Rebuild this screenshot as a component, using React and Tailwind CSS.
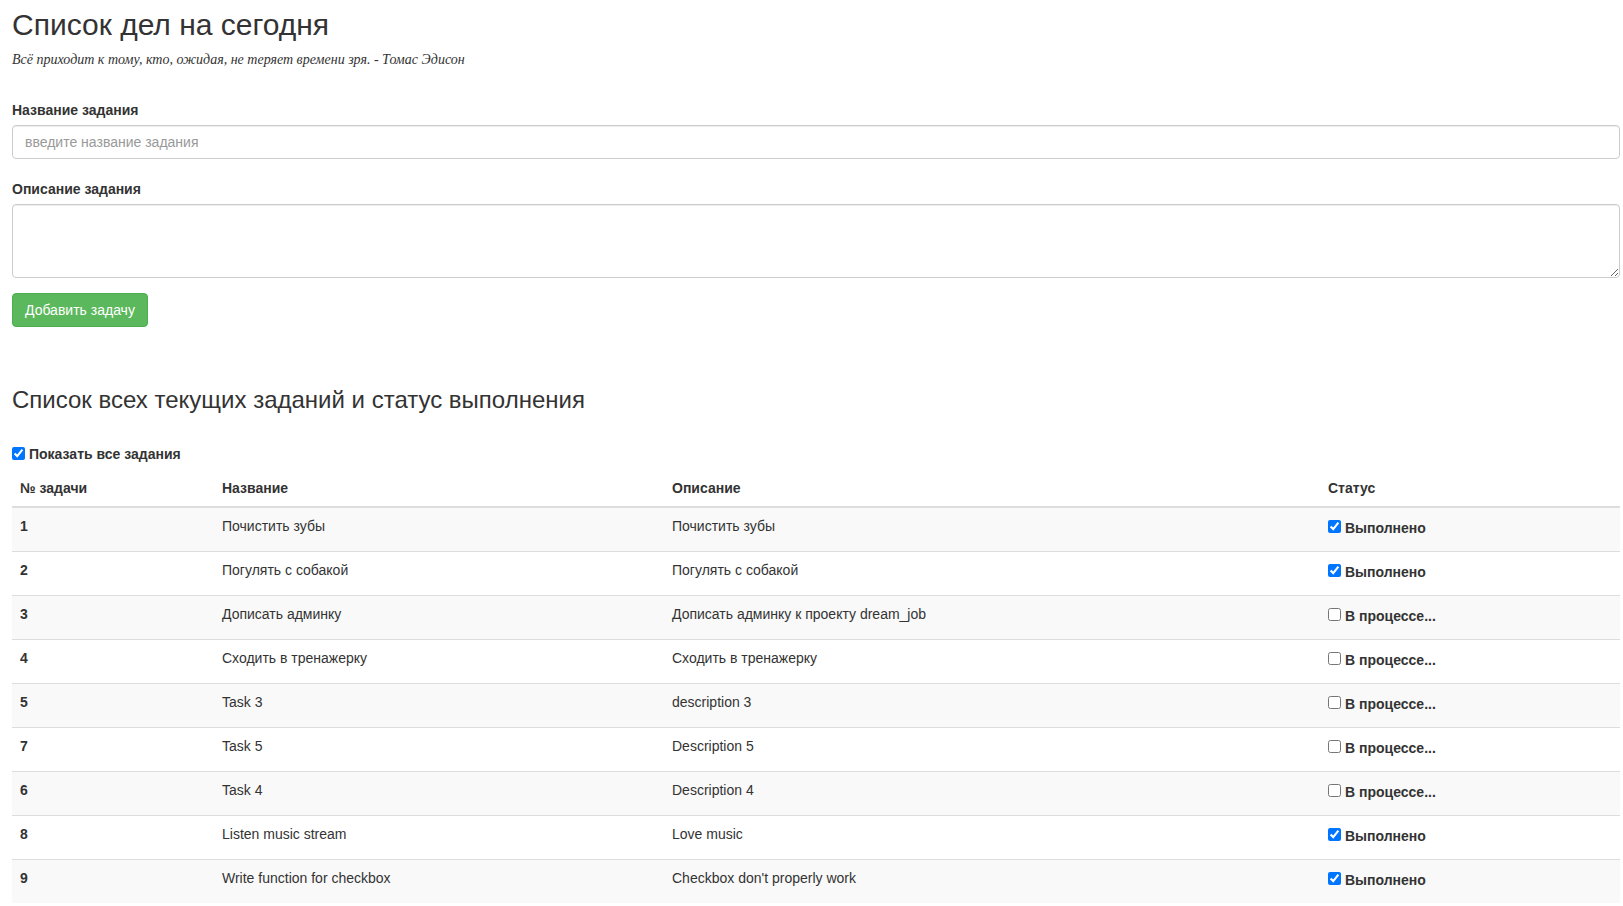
const tasks = [
  { id: 1, name: "Почистить зубы", desc: "Почистить зубы", done: true },
  { id: 2, name: "Погулять с собакой", desc: "Погулять с собакой", done: true },
  { id: 3, name: "Дописать админку", desc: "Дописать админку к проекту dream_job", done: false },
  { id: 4, name: "Сходить в тренажерку", desc: "Сходить в тренажерку", done: false },
  { id: 5, name: "Task 3", desc: "description 3", done: false },
  { id: 7, name: "Task 5", desc: "Description 5", done: false },
  { id: 6, name: "Task 4", desc: "Description 4", done: false },
  { id: 8, name: "Listen music stream", desc: "Love music", done: true },
  { id: 9, name: "Write function for checkbox", desc: "Checkbox don't properly work", done: true },
];

export default function App() {
  return (
    <div className="min-h-screen bg-white pl-[12px] pr-[3px] pt-[8px] text-[14px] leading-[20px] text-[#333] font-['Liberation_Sans',Arial,sans-serif]">
      <h2 className="text-[30px] leading-[33px] font-normal">Список дел на сегодня</h2>
      <p className="mt-[9px] italic font-['Liberation_Serif','Times_New_Roman',serif] text-[14px] leading-[20px]">
        Всё приходит к тому, кто, ожидая, не теряет времени зря. - Томас Эдисон
      </p>

      <form className="mt-[30px]" onSubmit={(e) => e.preventDefault()}>
        <label className="block font-bold mb-[5px]">Название задания</label>
        <input
          type="text"
          placeholder="введите название задания"
          className="block w-full h-[34px] px-[12px] py-[6px] border border-[#ccc] rounded-[4px] shadow-[inset_0_1px_1px_rgba(0,0,0,0.075)] placeholder:text-[#999] outline-none"
        />
        <label className="block font-bold mt-[20px] mb-[5px]">Описание задания</label>
        <textarea
          rows={3}
          className="block w-full h-[74px] px-[12px] py-[6px] border border-[#ccc] rounded-[4px] shadow-[inset_0_1px_1px_rgba(0,0,0,0.075)] outline-none resize"
        />
        <button
          type="submit"
          className="mt-[15px] h-[34px] px-[12px] text-white bg-[#5cb85c] border border-[#4cae4c] rounded-[4px]"
        >
          Добавить задачу
        </button>
      </form>

      <h3 className="mt-[60px] text-[24px] leading-[26px] font-normal">
        Список всех текущих заданий и статус выполнения
      </h3>

      <label className="mt-[31px] flex items-start h-[20px] font-bold">
        <input type="checkbox" defaultChecked className="w-[13px] h-[13px] m-0 mt-[3px] mr-[4px]" />
        Показать все задания
      </label>

      <table className="mt-[6px] w-full border-collapse">
        <thead>
          <tr className="border-b-2 border-[#ddd]">
            <th className="w-[202px] text-left p-[8px] font-bold">№ задачи</th>
            <th className="w-[450px] text-left p-[8px] font-bold">Название</th>
            <th className="w-[656px] text-left p-[8px] font-bold">Описание</th>
            <th className="text-left p-[8px] font-bold">Статус</th>
          </tr>
        </thead>
        <tbody>
          {tasks.map((t, i) => (
            <tr key={t.id} className={"h-[44px] border-t border-[#ddd] " + (i % 2 === 0 ? "bg-[#f9f9f9]" : "bg-white")}>
              <td className="align-top p-[8px] font-bold">{t.id}</td>
              <td className="align-top p-[8px]">{t.name}</td>
              <td className="align-top p-[8px]">{t.desc}</td>
              <td className="align-top px-[8px] pt-[10px]">
                <label className="flex items-start font-bold">
                  <input type="checkbox" defaultChecked={t.done} className="w-[13px] h-[13px] m-0 mt-[2px] mr-[4px]" />
                  {t.done ? "Выполнено" : "В процессе..."}
                </label>
              </td>
            </tr>
          ))}
        </tbody>
      </table>
    </div>
  );
}
